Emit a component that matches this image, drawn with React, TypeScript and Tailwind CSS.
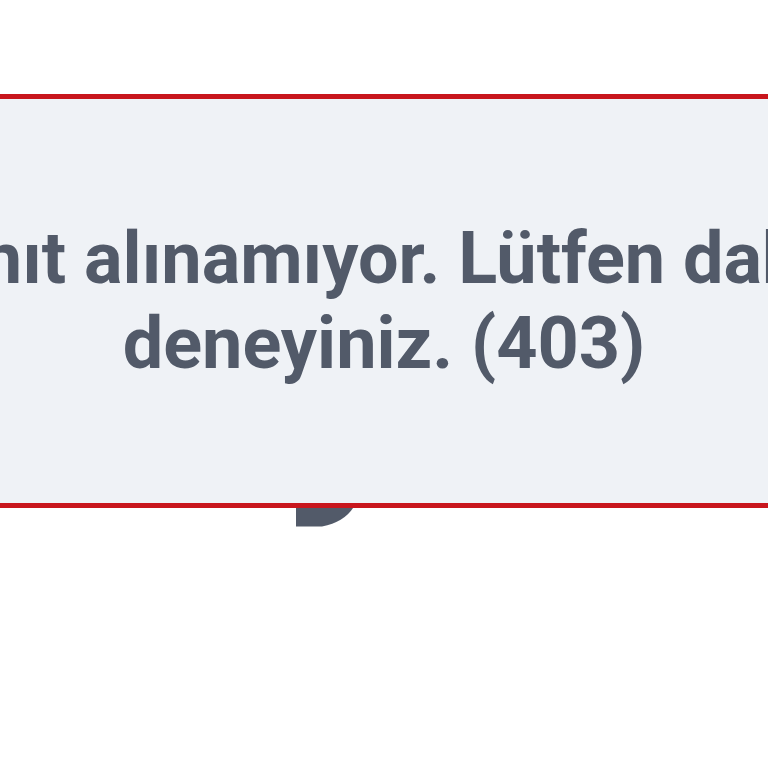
import React from "react";

export default function App() {
  return (
    <div className="w-[768px] h-[768px] bg-white overflow-hidden relative" style={{ fontFamily: "Roboto, 'Liberation Sans', sans-serif" }}>
      <div className="mt-[94px] h-[414px] border-y-[5px] border-[#c8161d] bg-[#eff2f6] flex items-center justify-center overflow-hidden">
        <div className="text-[72px] leading-[85px] font-bold text-[#525a69] text-center whitespace-nowrap">
          <div className="pr-[26px]">Yanıt alınamıyor. Lütfen daha</div>
          <div>deneyiniz. (403)</div>
        </div>
      </div>
      <svg className="block ml-[296px]" width="60" height="22" viewBox="0 0 60 22">
        <path d="M0 0 L57 0 Q48 14 26 18.5 L0 18.5 Z" fill="#525a69" />
      </svg>
    </div>
  );
}
